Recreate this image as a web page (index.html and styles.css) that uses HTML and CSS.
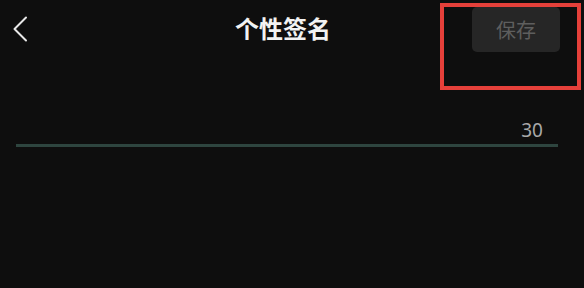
FILE: index.html
```html
<!DOCTYPE html>
<html lang="zh">
<head>
<meta charset="utf-8">
<title>个性签名</title>
<link rel="stylesheet" href="styles.css">
</head>
<body>
<div class="screen">
  <header class="topbar">
    <div class="left">
      <svg class="back" width="16" height="26" viewBox="0 0 16 26" aria-hidden="true">
        <polyline points="14,1.5 2.5,13 14,24.5" fill="none" stroke="#e8e8e8" stroke-width="2" stroke-linecap="round" stroke-linejoin="round"/>
      </svg>
    </div>
    <h1 class="title">个性签名</h1>
    <div class="right">
      <button class="save">保存</button>
    </div>
  </header>
  <section class="field">
    <div class="counter">30</div>
    <div class="underline"></div>
  </section>
  <div class="highlight"></div>
</div>
</body>
</html>
```
FILE: styles.css
```css
html, body {
  margin: 0;
  padding: 0;
  background: #0d0d0d;
}
.screen {
  position: relative;
  width: 584px;
  height: 288px;
  overflow: hidden;
  background: #0e0e0e;
  font-family: "Noto Sans CJK SC", "Noto Sans", sans-serif;
}
.topbar {
  display: grid;
  grid-template-columns: 1fr auto 1fr;
  align-items: center;
  padding: 7px 24px 0 12px;
  height: 45px;
}
.left {
  display: flex;
  align-items: center;
}
.back {
  display: block;
  margin-top: -2px;
}
.title {
  margin: -3px 6px 0 0;
  font-size: 24px;
  font-weight: 700;
  color: #f2f2f2;
  line-height: 1;
}
.right {
  display: flex;
  justify-content: flex-end;
}
.save {
  width: 88px;
  height: 45px;
  border: none;
  border-radius: 5px;
  background: #262626;
  color: #5e5e5e;
  font-family: "Noto Sans CJK SC", sans-serif;
  font-size: 20px;
  padding: 0;
}
.field {
  padding: 0 26px 0 16px;
  margin-top: 67px;
}
.counter {
  text-align: right;
  padding-right: 15px;
  margin-bottom: 3px;
  font-family: "Noto Sans", sans-serif;
  font-size: 19px;
  line-height: 22px;
  color: #a8a8a8;
}
.underline {
  height: 3px;
  background: #2e453f;
}
.highlight {
  position: absolute;
  left: 440px;
  top: 3px;
  width: 133px;
  height: 79px;
  border: 4px solid #e5403a;
}
```
